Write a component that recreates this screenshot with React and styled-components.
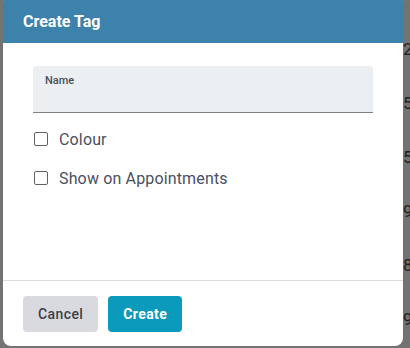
import React from "react"
import styled, { createGlobalStyle } from "styled-components"

const GlobalStyle = createGlobalStyle`
  html, body {
    margin: 0;
    padding: 0;
    width: 410px;
    height: 348px;
    overflow: hidden;
    font-family: Roboto, "Liberation Sans", sans-serif;
  }
`

const Page = styled.div`
  position: relative;
  width: 410px;
  height: 348px;
  background: #737373;
  overflow: hidden;
`

const NumberColumn = styled.div`
  display: flex;
  flex-direction: column;
  gap: 37px;
  padding: 41px 0 0 403px;
  font-size: 17px;
  line-height: 17px;
  color: #1f1f1f;
`

const Dialog = styled.div`
  position: absolute;
  left: 3px;
  top: -6px;
  width: 400px;
  height: 352px;
  display: flex;
  flex-direction: column;
  background: #ffffff;
  border-radius: 8px;
  overflow: hidden;
`

const Header = styled.div`
  height: 49px;
  padding: 6px 20px 0;
  box-sizing: border-box;
  display: flex;
  align-items: center;
  background: #3d82ab;
`

const Title = styled.h2`
  margin: 0;
  font-size: 16px;
  font-weight: 700;
  color: #ffffff;
`

const Body = styled.div`
  flex: 1;
  padding: 23px 30px 0;
  display: flex;
  flex-direction: column;
`

const Field = styled.div`
  height: 47px;
  padding: 8px 12px 0;
  box-sizing: border-box;
  background: #ebeff2;
  border-radius: 4px 4px 0 0;
  border-bottom: 1px solid #7f8184;
`

const FieldLabel = styled.label`
  display: block;
  font-size: 11px;
  line-height: 13px;
  font-weight: 500;
  color: #4b4e5c;
`

const Options = styled.div`
  display: flex;
  flex-direction: column;
  gap: 15px;
  margin-top: 14px;
`

const OptionRow = styled.label`
  display: flex;
  align-items: center;
  gap: 11px;
  height: 24px;
  padding-left: 1px;
  font-size: 16px;
  letter-spacing: 0.15px;
  color: #4a4f63;
`

const Box = styled.span`
  width: 14px;
  height: 14px;
  box-sizing: border-box;
  border: 1.5px solid #5f6166;
  border-radius: 2px;
  background: #ffffff;
`

const Footer = styled.div`
  display: flex;
  gap: 10px;
  padding: 15px 20px 14px;
  border-top: 1px solid #dcdce3;
`

const Button = styled.button`
  height: 36px;
  padding: 0 15px;
  border: none;
  border-radius: 4px;
  font-family: Roboto, "Liberation Sans", sans-serif;
  font-size: 14px;
  letter-spacing: 0.4px;
  font-weight: ${(p) => (p.$primary ? 700 : 500)};
  color: ${(p) => (p.$primary ? "#ffffff" : "#3f4048")};
  background: ${(p) => (p.$primary ? "#0b9abc" : "#d9dae0")};
`

export default function App() {
  return (
    <>
      <GlobalStyle />
      <Page>
        <NumberColumn>
          {["2", "5", "5", "9", "8", "9"].map((n, i) => (
            <span key={i}>{n}</span>
          ))}
        </NumberColumn>
        <Dialog>
          <Header>
            <Title>Create Tag</Title>
          </Header>
          <Body>
            <Field>
              <FieldLabel>Name</FieldLabel>
            </Field>
            <Options>
              <OptionRow>
                <Box />
                Colour
              </OptionRow>
              <OptionRow>
                <Box />
                Show on Appointments
              </OptionRow>
            </Options>
          </Body>
          <Footer>
            <Button>Cancel</Button>
            <Button $primary>Create</Button>
          </Footer>
        </Dialog>
      </Page>
    </>
  )
}
